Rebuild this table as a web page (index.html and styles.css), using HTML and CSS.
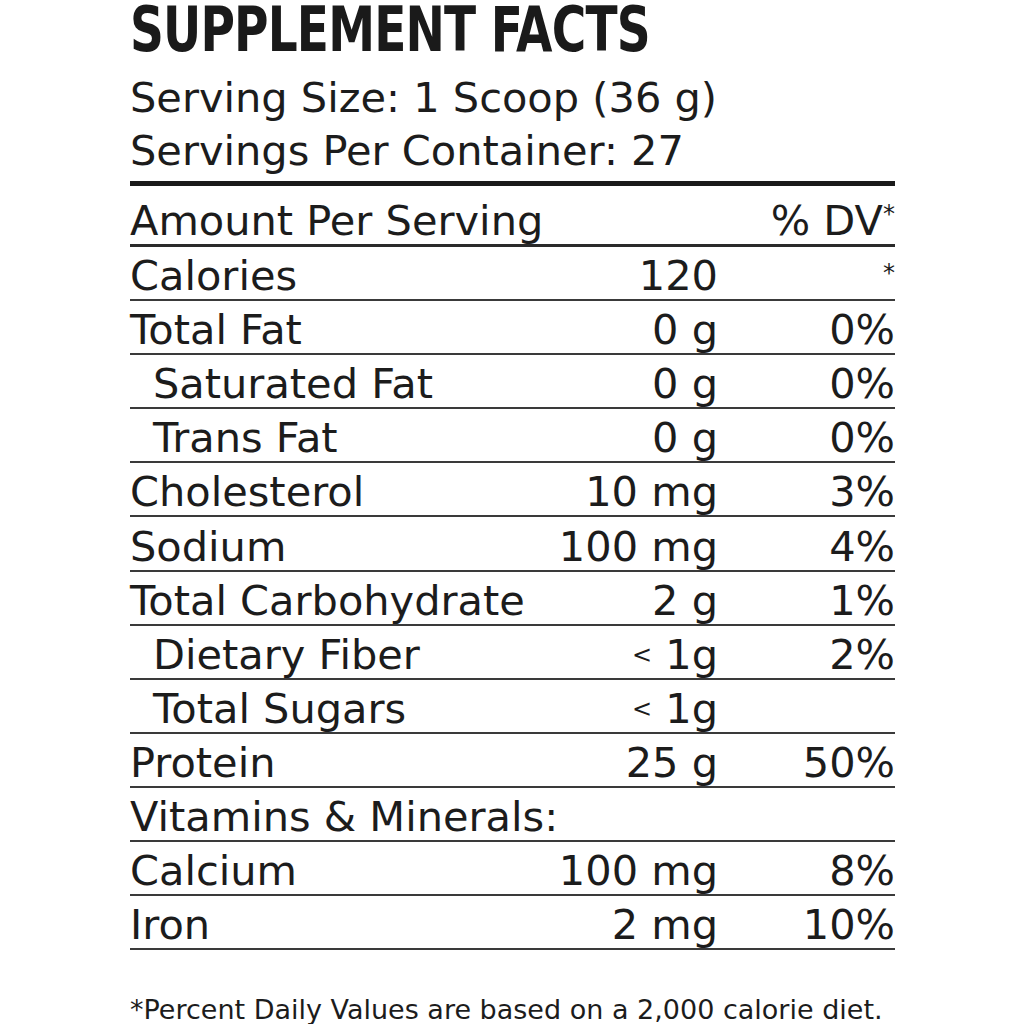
FILE: index.html
```html
<!DOCTYPE html>
<html lang="en">
<head>
<meta charset="utf-8">
<title>Supplement Facts</title>
<link rel="stylesheet" href="styles.css">
</head>
<body>
<main class="label">
  <header class="head">
    <h1 class="title"><span class="title-text">SUPPLEMENT FACTS</span></h1>
    <p class="serving">Serving Size: 1 Scoop (36 g)</p>
    <p class="serving">Servings Per Container: 27</p>
  </header>
  <div class="facts">
    <div class="row row-head">
      <span class="name">Amount Per Serving</span>
      <span class="val"></span>
      <span class="dv">% DV<sup class="ast">*</sup></span>
    </div>
    <div class="row">
      <span class="name">Calories</span>
      <span class="val">120</span>
      <span class="dv"><sup class="ast ast-top">*</sup></span>
    </div>
    <div class="row">
      <span class="name">Total Fat</span>
      <span class="val">0 g</span>
      <span class="dv">0%</span>
    </div>
    <div class="row">
      <span class="name sub">Saturated Fat</span>
      <span class="val">0 g</span>
      <span class="dv">0%</span>
    </div>
    <div class="row">
      <span class="name sub">Trans Fat</span>
      <span class="val">0 g</span>
      <span class="dv">0%</span>
    </div>
    <div class="row">
      <span class="name">Cholesterol</span>
      <span class="val">10 mg</span>
      <span class="dv">3%</span>
    </div>
    <div class="row">
      <span class="name">Sodium</span>
      <span class="val">100 mg</span>
      <span class="dv">4%</span>
    </div>
    <div class="row">
      <span class="name">Total Carbohydrate</span>
      <span class="val">2 g</span>
      <span class="dv">1%</span>
    </div>
    <div class="row">
      <span class="name sub">Dietary Fiber</span>
      <span class="val"><span class="lt">&lt;</span> 1g</span>
      <span class="dv">2%</span>
    </div>
    <div class="row">
      <span class="name sub">Total Sugars</span>
      <span class="val"><span class="lt">&lt;</span> 1g</span>
      <span class="dv"></span>
    </div>
    <div class="row">
      <span class="name">Protein</span>
      <span class="val">25 g</span>
      <span class="dv">50%</span>
    </div>
    <div class="row">
      <span class="name">Vitamins &amp; Minerals:</span>
      <span class="val"></span>
      <span class="dv"></span>
    </div>
    <div class="row">
      <span class="name">Calcium</span>
      <span class="val">100 mg</span>
      <span class="dv">8%</span>
    </div>
    <div class="row">
      <span class="name">Iron</span>
      <span class="val">2 mg</span>
      <span class="dv">10%</span>
    </div>
  </div>
  <p class="note">*Percent Daily Values are based on a 2,000 calorie diet.</p>
</main>
</body>
</html>
```
FILE: styles.css
```css
html, body {
  margin: 0;
  padding: 0;
  background: #ffffff;
}

body {
  color: #1c1c1c;
  font-family: "DejaVu Sans", "Liberation Sans", sans-serif;
}

.label {
  width: 765px;
  margin-left: 130px;
}

.head {
  border-bottom: 5px solid #1a1a1a;
  padding-bottom: 4px;
}

.title {
  margin: 0;
  font-family: "DejaVu Sans Condensed", "Liberation Sans", sans-serif;
  font-weight: 700;
  font-size: 63px;
  line-height: 60px;
  letter-spacing: -1px;
  color: #1a1a1a;
  white-space: nowrap;
}

.title-text {
  display: inline-block;
  transform: scaleX(0.83);
  transform-origin: left center;
}

.serving {
  margin: 0;
  font-size: 41.5px;
  line-height: 53px;
}

.serving:first-of-type {
  margin-top: 11px;
}

.facts {
  display: flex;
  flex-direction: column;
}

.row {
  display: grid;
  grid-template-columns: 1fr auto 177px;
  align-items: start;
  border-bottom: 2px solid #3a3a3a;
  font-size: 41.5px;
  line-height: 46px;
  padding-top: 6.1px;
  box-sizing: content-box;
  height: 46px;
}

.row-head {
  height: 52px;
  padding-top: 6px;
  border-bottom-width: 3px;
  border-bottom-color: #2a2a2a;
}

.row-head .name,
.row-head .dv {
  padding-top: 6px;
}

.name {
  white-space: nowrap;
}

.name.sub {
  padding-left: 23px;
}

.val {
  text-align: right;
  white-space: nowrap;
}

.dv {
  text-align: right;
  white-space: nowrap;
}

.ast {
  font-size: 24px;
  vertical-align: top;
  line-height: 1;
  position: relative;
  top: 4px;
}

.ast-top {
  top: 8px;
}

.lt {
  font-size: 24px;
  vertical-align: 6px;
}

.note {
  margin: 44px 0 0;
  font-size: 27px;
  line-height: 32px;
  white-space: nowrap;
}
```
